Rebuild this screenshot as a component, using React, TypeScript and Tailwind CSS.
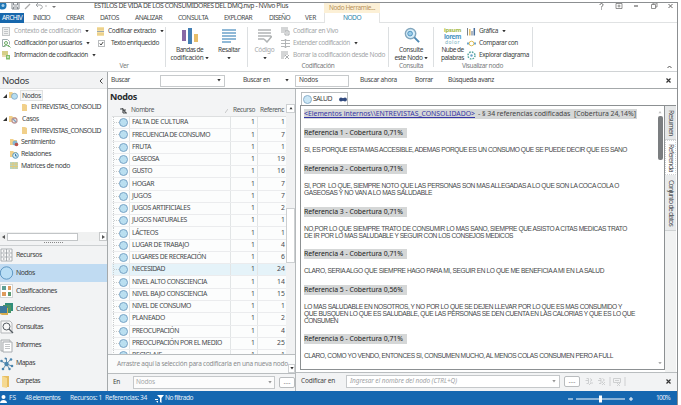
import { useLayoutEffect, useRef, type ReactNode } from "react";

/** Text whose tracking is computed so that the run is exactly `w` pixels long. */
function Fit({ w, children, className = "", vertical = false }: { w: number; children: string; className?: string; vertical?: boolean }) {
  const ref = useRef<HTMLSpanElement>(null);
  useLayoutEffect(() => {
    const el = ref.current;
    if (!el) return;
    el.style.letterSpacing = "0px";
    const box = el.getBoundingClientRect();
    const natural = vertical ? box.height : box.width;
    el.style.letterSpacing = `${(w - natural) / children.length}px`;
  }, [w, children, vertical]);
  return (
    <span ref={ref} className={`block w-max shrink-0 whitespace-pre ${vertical ? "[writing-mode:vertical-rl]" : ""} ${className}`}>
      {children}
    </span>
  );
}

function Caret({ className = "" }: { className?: string }) {
  return (
    <svg viewBox="0 0 4 3" className={`h-[2.5px] w-[4px] shrink-0 ${className}`}>
      <path d="M0 0h4L2 3z" fill="#333" />
    </svg>
  );
}

type Kind = "page" | "user" | "info" | "bands" | "stack" | "extend" | "erase" | "chart" | "compare" | "diagram";

function SmallIcon({ kind }: { kind: Kind }) {
  return (
    <svg viewBox="0 0 9 9" className="size-[9px] shrink-0" fill="none">
      {kind === "page" && (
        <g stroke="#c3c6c8">
          <rect x=".5" y=".5" width="7" height="8" fill="#eeefef" />
          <path d="M2 2.5h4M2 4.5h4M2 6.5h4" />
        </g>
      )}
      {kind === "user" && (
        <g>
          <path d="M.5.5h5l2 2v3M.5.5v7h3" stroke="#9eabb0" />
          <circle cx="4" cy="4" r="1.5" stroke="#6cab66" />
          <path d="M1.5 8c.3-2.500 4.700-2.500 5 0M6 6l2.500 2.500" stroke="#6cab66" />
        </g>
      )}
      {kind === "info" && (
        <g>
          <path d="M0 1h6M0 3h6" stroke="#c8c060" strokeWidth="1.300" />
          <path d="M0 5h4" stroke="#d5b85c" />
          <rect x="4" y="4" width="4" height="4.500" fill="#82bd69" />
          <path d="M5 6h2" stroke="#fff" />
        </g>
      )}
      {kind === "bands" && (
        <g>
          <rect x="1" width="7" height="9" fill="#f5e0a6" />
          <path d="M1 2h7M1 7h7" stroke="#e3c373" />
          <path d="M1 4.500h7" stroke="#9ba6ac" />
        </g>
      )}
      {kind === "stack" && <path d="M0 1h7M0 3h7M0 5h3M4 4h4v4H4zM5 6h2" stroke="#a9acae" />}
      {kind === "extend" && <path d="M0 1.500h3M6 1.500h3M0 4.500h9M0 7.500h3M6 7.500h3M4.500 0v9M3 2l1.500-2L6 2M3 7l1.500 2L6 7" stroke="#aaaeb0" strokeWidth=".9" />}
      {kind === "erase" && <path d="M0 1h7M0 3h7M0 5h4M0 7h3M4 4l4 4M8 4L4 8" stroke="#a9acae" />}
      {kind === "chart" && (
        <g>
          <path d="M.5 1v7.500" stroke="#78828a" />
          <path d="M2.800 2v6.500" stroke="#e5bc65" strokeWidth="1.500" />
          <path d="M5 4v4.500" stroke="#8390a0" strokeWidth="1.300" />
          <path d="M7.300 1v7.500" stroke="#496f9c" strokeWidth="1.500" />
        </g>
      )}
      {kind === "compare" && (
        <g>
          <circle cx="4.500" cy="4.500" r="2.300" stroke="#dfbd55" />
          <path d="M0 4.500h2M7 4.500h2" stroke="#6ca4c8" strokeWidth="2" />
        </g>
      )}
      {kind === "diagram" && (
        <g>
          <circle cx="4.500" cy="4.500" r="3.500" stroke="#56a6a0" strokeWidth="1.500" strokeDasharray="1.600 1.140" />
          <circle cx="4.500" cy="4.500" r="1.200" fill="#6ba4cc" />
        </g>
      )}
    </svg>
  );
}

function Command({ icon, w, label, caret, dim }: { icon: Kind; w: number; label: string; caret?: boolean; dim?: boolean }) {
  return (
    <div className={`flex h-[12.3px] items-center gap-[3px] ${dim ? "text-[#a3a6a8]" : "text-[#3c3f41]"}`}>
      <SmallIcon kind={icon} />
      <Fit w={w}>{label}</Fit>
      {caret && <Caret className="ml-px" />}
    </div>
  );
}

function Sep() {
  return <div className="mt-[4px] h-[40px] w-px shrink-0 bg-[#dcdfe1]" />;
}

function Group({ className, label, labelW, children }: { className: string; label?: string; labelW?: number; children: ReactNode }) {
  return (
    <div className={`flex h-[48px] shrink-0 flex-col ${className}`}>
      <div className="flex h-[39px] shrink-0 pt-[2px]">{children}</div>
      {label && (
        <div className="flex h-[9px] items-center justify-center text-[#797c7e]">
          <Fit w={labelW ?? 30}>{label}</Fit>
        </div>
      )}
    </div>
  );
}

function Big({ icon, className, one, oneW, two, twoW, dim }: {
  icon: ReactNode; className: string; one: string; oneW: number; two?: string; twoW?: number; dim?: boolean;
}) {
  return (
    <div className={`flex shrink-0 flex-col items-center ${className} ${dim ? "text-[#a3a6a8]" : "text-[#3c3f41]"}`}>
      <div className="flex h-[21px] items-center">{icon}</div>
      <div className="flex h-[8px] items-center"><Fit w={oneW}>{one}</Fit></div>
      <div className="flex h-[8px] items-center gap-px">
        {two && <Fit w={twoW ?? 20}>{two}</Fit>}
        {two !== "palabras" && <Caret />}
      </div>
    </div>
  );
}

function TitleBar() {
  return (
    <div className="flex h-[10px] items-start overflow-hidden">
      <svg viewBox="0 0 60 10" className="h-[10px] w-[60px] shrink-0" fill="none">
        <circle cx="2.500" cy="2.500" r="4" fill="#2077b5" />
        <circle cx="3" cy="2.500" r="1.500" fill="#a7d0ed" />
        <path d="M12 0v6h7V0M13.500 0v2h4V0M13.500 6V4h4v2" stroke="#858b91" />
        <path d="M25 6l5-5" stroke="#aaa" strokeWidth="1.200" />
        <path d="M36 2h4c3 0 3 4 0 4M36 2l2-2M36 2l2 2" stroke="#a1a5a8" />
        <path d="M45 3h2" stroke="#bbb" />
        <path d="M52 3h4l-2 2z" fill="#777" />
      </svg>
      <Fit w={194} className="ml-[34px] mt-[-2px] text-[6.8px] leading-[9px] text-[#444]">ESTILOS DE VIDA DE LOS CONSUMIDORES DEL DMQ.nvp - NVivo Plus</Fit>
      <div className="ml-[36px] flex h-[10px] w-[56px] items-center justify-center bg-[#fcf0d6] text-[#b8935a]">
        <Fit w={46}>Nodo Herramie...</Fit>
      </div>
      <svg viewBox="0 0 78 8" className="ml-[217px] h-[8px] w-[78px] shrink-0" fill="none" stroke="#666">
        <path d="M3 2c0-2 3-2 3 0 0 1-1.500 1-1.500 2.500M4.500 5.500v1" />
        <path d="M19 .500h6v5h-6zM22 1.500v3M20.500 3h3" strokeWidth=".7" />
        <path d="M37 3h4" strokeWidth="1.200" />
        <path d="M54.500 1.500h4v4h-4zM56 1.500V0h4v4h-1.500" strokeWidth=".7" />
        <path d="M71.500 1l4 4M75.500 1l-4 4" />
      </svg>
    </div>
  );
}

const tabs = [
  { t: "INICIO", w: 17, m: "ml-[9px]" },
  { t: "CREAR", w: 18, m: "ml-[16px]" },
  { t: "DATOS", w: 19, m: "ml-[16px]" },
  { t: "ANALIZAR", w: 27, m: "ml-[16px]" },
  { t: "CONSULTA", w: 30, m: "ml-[16px]" },
  { t: "EXPLORAR", w: 28, m: "ml-[16px]" },
  { t: "DISEÑO", w: 21, m: "ml-[17px]" },
  { t: "VER", w: 11, m: "ml-[15px]" },
];

function TabStrip() {
  return (
    <div className="flex h-[10px] items-start text-[6.6px] text-[#494c4e]">
      <div className="flex h-[10px] w-[24px] items-center bg-[#1767ac] pl-[2px] text-white"><Fit w={20}>ARCHIV</Fit></div>
      <div className="flex h-[10px] w-[300px] items-center border-b border-[#e0e2e3] pt-[2px]">
        {tabs.map((x) => <Fit key={x.t} w={x.w} className={x.m}>{x.t}</Fit>)}
      </div>
      <div className="flex h-[10px] w-[56px] items-center justify-center border-x border-[#e3e4e4] pt-px text-[#2e7fa9]"><Fit w={18}>NODO</Fit></div>
      <div className="h-[10px] flex-1 border-b border-[#e0e2e3]" />
    </div>
  );
}

function Ribbon() {
  return (
    <div className="flex h-[49px] border-b border-[#d0d3d5]">
      <Group className="w-[165px] pl-[2px] [&>div:last-child]:pl-[81px]" label="Ver" labelW={9}>
        <div className="w-[94px]">
          <Command icon="page" w={67} label="Contexto de codificación" caret dim />
          <Command icon="user" w={68} label="Codificación por usuarios" caret />
          <Command icon="info" w={74} label="Información de codificación" caret />
        </div>
        <div>
          <Command icon="bands" w={48} label="Codificar extracto" caret />
          <div className="flex h-[12.3px] items-center pl-[2px] text-[#3c3f41]">
            <svg viewBox="0 0 7 7" className="mr-[6px] size-[7px]" fill="none">
              <rect x=".5" y=".5" width="6" height="6" stroke="#b9bcbe" />
              <path d="M1.800 3.500l1.200 1.500 2.200-3" stroke="#444" />
            </svg>
            <Fit w={48}>Texto enriquecido</Fit>
          </div>
        </div>
      </Group>
      <Sep />
      <Group className="w-[81px]">
        <Big className="w-[47px]" one="Bandas de" oneW={27} two="codificación" twoW={33} icon={
          <svg viewBox="0 0 18 17" className="h-[17px] w-[18px]">
            <path d="M1 3h4v11H1z" fill="#8868a5" /><path d="M7 1h4v16H7z" fill="#447fb4" /><path d="M13 7h4v8h-4z" fill="#e7bd69" />
          </svg>} />
        <Big className="w-[32px]" one="Resaltar" oneW={22} icon={
          <svg viewBox="0 0 14 14" className="size-[14px]"><path d="M0 1h14M0 4h14M0 7h14M0 10h14M0 13h9" stroke="#6ca2ca" strokeWidth="1.700" /></svg>} />
      </Group>
      <Sep />
      <Group className="w-[140px]" label="Codificación" labelW={33}>
        <Big className="w-[33px]" dim one="Código" oneW={20} icon={
          <svg viewBox="0 0 14 14" className="size-[14px]" fill="none" stroke="#b1b4b5" strokeWidth="1.500"><path d="M0 1h13M0 4h13M0 7h13M0 10h6M6 10l3 3 5-6" /></svg>} />
        <div>
          <Command icon="stack" w={45} label="Codificar en Vivo" dim />
          <Command icon="extend" w={57} label="Extender codificación" dim caret />
          <Command icon="erase" w={92} label="Borrar la codificación desde Nodo" dim />
        </div>
      </Group>
      <Sep />
      <Group className="w-[44px]" label="Consulta" labelW={24}>
        <Big className="w-[44px]" one="Consulte" oneW={24} two="este Nodo" twoW={28} icon={
          <svg viewBox="0 0 18 18" className="size-[17px]" fill="none">
            <circle cx="8" cy="7" r="5.500" fill="#d8eefa" stroke="#82a6bd" strokeWidth="1.500" />
            <circle cx="7.500" cy="7" r="2.500" fill="#9bcde9" stroke="#4d91be" />
            <path d="M12 11l5 5" stroke="#4a87b3" strokeWidth="2" />
          </svg>} />
      </Group>
      <Sep />
      <Group className="w-[98px] [&>div:last-child]:pr-[1px]" label="Visualizar nodo" labelW={41}>
        <Big className="w-[33px] pr-[1px] pl-[5px]" one="Nube de" oneW={22} two="palabras" twoW={23} icon={
          <div className="flex h-[18px] w-[18px] flex-col items-center">
            <Fit w={17} className="h-[6px] text-[6px] font-bold leading-[6px] text-[#a4b843]">ipsum</Fit>
            <Fit w={17} className="h-[7px] text-[6.500px] font-bold leading-[7px] text-[#4c96c2]">lorem</Fit>
            <Fit w={15} className="h-[5px] text-[5px] leading-[5px] text-[#78b0be]">dolor</Fit>
          </div>} />
        <div>
          <Command icon="chart" w={19} label="Gráfica" caret />
          <Command icon="compare" w={39} label="Comparar con" />
          <Command icon="diagram" w={50} label="Explorar diagrama" />
        </div>
      </Group>
      <Sep />
      <svg viewBox="0 0 5 4" className="ml-[134px] mt-[42px] h-[4px] w-[5px]" fill="none"><path d="M.5 3l2-2 2 2" stroke="#555" /></svg>
    </div>
  );
}

function Close() {
  return <svg viewBox="0 0 5 5" className="size-[5px] shrink-0"><path d="M.5.5l4 4M4.500.5l-4 4" stroke="#333" strokeWidth="1.200" /></svg>;
}

function SearchBar() {
  return (
    <div className="flex h-[17px] items-center border-b border-[#a4a8aa] pl-[3px] pt-px text-[#444]">
      <Fit w={19}>Buscar</Fit>
      <div className="ml-[30px] flex h-[12px] w-[65px] items-center justify-end border border-[#c7cacc] pr-[3px]"><Caret /></div>
      <Fit w={27} className="ml-[18px]">Buscar en</Fit>
      <Caret className="ml-[15px]" />
      <div className="ml-[6px] flex h-[12px] w-[54px] items-center border border-[#c7cacc] pl-[3px]"><Fit w={19}>Nodos</Fit></div>
      <Fit w={37} className="ml-[11px]">Buscar ahora</Fit>
      <Fit w={18} className="ml-[18px]">Borrar</Fit>
      <Fit w={46} className="ml-[15px]">Búsqueda avanz</Fit>
      <div className="ml-auto mr-[6px]"><Close /></div>
    </div>
  );
}

function TreeIcon({ kind }: { kind: "node" | "case" | "folder" | "feel" | "rel" | "matrix" }) {
  return (
    <svg viewBox="0 0 9 9" className="size-[9px] shrink-0" fill="none">
      {kind !== "matrix" && <path d={kind === "folder" ? "M2 1h3l2 1v6H2z" : "M0 1h3l1 1h3v5H0z"} fill="#f1d08a" />}
      {kind === "node" && <circle cx="5.500" cy="5.300" r="3" fill="#b9def1" stroke="#709dc2" strokeWidth=".7" />}
      {kind === "case" && <g strokeWidth="1.300"><circle cx="5.500" cy="5.500" r="2.500" fill="#f3eceb" stroke="#bd9696" /><path d="M4 4l3 3" stroke="#7ba2bd" /></g>}
      {kind === "feel" && <g><circle cx="5" cy="5" r="2.500" fill="#86b7d2" /><circle cx="6.500" cy="6.500" r="1.800" fill="#b9524b" /></g>}
      {kind === "rel" && <g><circle cx="5.500" cy="5.500" r="2.800" fill="#d8edf7" stroke="#5798bd" /><path d="M5.500 4v2H7" stroke="#427da7" /></g>}
      {kind === "matrix" && <g><rect y="1" width="8" height="7" fill="#b8d4c3" /><path d="M0 3h8M0 5.500h8M3 1v7M6 1v7" stroke="#e7c96e" strokeWidth=".8" /></g>}
    </svg>
  );
}

function Tree() {
  const arrow = <svg viewBox="0 0 4 4" className="size-[4px] shrink-0"><path d="M4 0v4H0z" fill="#333" /></svg>;
  return (
    <div className="h-[143px] bg-white pt-[1px] text-[6.8px] text-[#414446] [&>div]:flex [&>div]:h-[11.7px] [&>div]:items-center [&>div]:gap-[2px]">
      <div className="pl-[3px]">{arrow}<TreeIcon kind="node" /><div className="border border-[#e1e2e2] bg-[#f7f7f7] px-px leading-[9px]"><Fit w={19}>Nodos</Fit></div></div>
      <div className="pl-[20px]"><TreeIcon kind="folder" /><Fit w={70}>ENTREVISTAS_CONSOLID</Fit></div>
      <div className="pl-[3px]">{arrow}<TreeIcon kind="case" /><Fit w={17} className="ml-[2px]">Casos</Fit></div>
      <div className="pl-[20px]"><TreeIcon kind="folder" /><Fit w={70}>ENTREVISTAS_CONSOLID</Fit></div>
      <div className="pl-[10px]"><TreeIcon kind="feel" /><Fit w={34}>Sentimiento</Fit></div>
      <div className="pl-[10px]"><TreeIcon kind="rel" /><Fit w={30}>Relaciones</Fit></div>
      <div className="pl-[10px]"><TreeIcon kind="matrix" /><Fit w={49}>Matrices de nodo</Fit></div>
    </div>
  );
}

function NavIcon({ i }: { i: number }) {
  return (
    <svg viewBox="0 0 14 14" className="h-[14px] w-[14px] shrink-0" fill="none">
      {i === 0 && <g stroke="#9a9fa3" strokeWidth=".8"><path d="M1 1h11v12H1zM1 5h11M1 9h11M6.500 1v12" fill="#fafafa" /><path d="M3 3h1.500M8.500 3H10M3 7h1.500M8.500 7H10M3 11h1.500M8.500 11H10" stroke="#6f757a" /></g>}
      {i === 1 && <circle cx="6.500" cy="7" r="6.200" fill="#b9def5" stroke="#5590bd" strokeWidth=".9" />}
      {i === 2 && <g><rect x=".5" y=".5" width="12" height="13" stroke="#d1d5d6" fill="#fff" /><path d="M2 2h4v4H2z" fill="#5f9f94" /><path d="M8 2h3v4H8zM2 8h4v4H2z" fill="#de9b5c" /><path d="M8 8h3v4H8z" fill="#5c9a72" /></g>}
      {i === 3 && <g><path d="M5 1h8v8H5z" fill="#318d7b" /><path d="M3 3h8v8H3z" fill="#4d9565" /><path d="M0 6h8v7H2L0 12z" fill="#d9ad4d" /><path d="M0 4h7v7H0z" fill="#3d7a9d" /></g>}
      {i === 4 && <g><path d="M1 1h9l2 2v10H1z" fill="#f8f8f8" stroke="#b4b7ba" /><circle cx="6.500" cy="6.500" r="3.500" stroke="#555c62" /><path d="M9 9l4 4" stroke="#555c62" strokeWidth="1.300" /></g>}
      {i === 5 && <g stroke="#a8acaf"><path d="M1 1h9v11H1z" fill="#eee" /><path d="M3 3h9v10H3z" fill="#fff" /><path d="M5 5.500h5M5 7.500h5M5 9.500h5" strokeWidth=".7" /></g>}
      {i === 6 && <g stroke="#668fad"><path d="M6.500 7L1 4M6.500 7L11 2M6.500 7L12 9M6.500 7L3 12M6.500 7V1M6.500 7l3 5" /><g fill="#4b85ae" stroke="none"><circle cx="6.500" cy="7" r="2.200" /><circle cx="1.500" cy="4" r="1.300" /><circle cx="11" cy="2.500" r="1.300" /><circle cx="12" cy="9" r="1.300" /><circle cx="3" cy="12" r="1.300" /><circle cx="9.500" cy="12" r="1.200" /><circle cx="5.500" cy="1.500" r="1" /></g></g>}
      {i === 7 && <g><path d="M2 1h7v11H2z" fill="#e7bd61" /><path d="M2 1l5 2v10l-5-1z" fill="#f5d991" /></g>}
    </svg>
  );
}

const nav: [string, number][] = [["Recursos", 26], ["Nodos", 19], ["Clasificaciones", 41], ["Colecciones", 34], ["Consultas", 27], ["Informes", 25], ["Mapas", 19], ["Carpetas", 24]];

function Sidebar() {
  return (
    <div className="flex w-[108px] shrink-0 flex-col border-r border-[#a5a9ab] bg-[#f2f3f4]">
      <div className="flex h-[17px] shrink-0 items-center justify-between border-b border-[#dfe1e2] pl-[2px] pr-[4px] pt-px text-[9.5px] text-[#3c4144]">
        <Fit w={27}>Nodos</Fit>
        <svg viewBox="0 0 4 6" className="h-[6px] w-[4px]" fill="none"><path d="M3.500.5L1 3l2.500 2.500" stroke="#444" /></svg>
      </div>
      <Tree />
      <div className="flex h-[9px] items-center justify-between bg-[#f0f1f1]">
        <div className="flex h-[9px] w-[7px] items-center justify-center"><svg viewBox="0 0 3 4" className="h-[4px] w-[3px]"><path d="M3 0v4L0 2z" fill="#555" /></svg></div>
        <div className="mr-auto h-[8px] w-[71px] border border-[#c2c5c7] bg-white" />
        <div className="flex h-[9px] w-[8px] items-center justify-center border border-[#c7c9ca] bg-white"><svg viewBox="0 0 3 4" className="h-[4px] w-[3px]"><path d="M0 0v4l3-2z" fill="#555" /></svg></div>
      </div>
      <div className="flex h-[5px] items-start justify-center border-b border-[#cdd0d2] pt-[1px]"><div className="w-[19px] border-t border-dotted border-[#888]" /></div>
      {nav.map(([t, w], i) => (
        <div key={t} className={`flex h-[18.1px] shrink-0 items-center gap-[2px] text-[6.9px] text-[#3e4143] ${i === 1 ? "bg-[#c0dbf2]" : ""}`}>
          <NavIcon i={i} /><Fit w={w}>{t}</Fit>
        </div>
      ))}
    </div>
  );
}

const nodes: [string, number, number][] = [
  ["FALTA DE CULTURA", 56, 1], ["FRECUENCIA DE CONSUMO", 78, 7], ["FRUTA", 19, 1], ["GASEOSA", 27, 19], ["GUSTO", 20, 16],
  ["HOGAR", 22, 7], ["JUGOS", 19, 7], ["JUGOS ARTIFICIALES", 58, 2], ["JUGOS NATURALES", 55, 1], ["LÁCTEOS", 26, 1],
  ["LUGAR DE TRABAJO", 57, 4], ["LUGARES DE RECREACIÓN", 74, 6], ["NECESIDAD", 33, 24], ["NIVEL ALTO CONSCIENCIA", 75, 14],
  ["NIVEL BAJO CONSCIENCIA", 75, 15], ["NIVEL DE CONSUMO", 59, 1], ["PLANEADO", 33, 2], ["PREOCUPACIÓN", 47, 4],
  ["PREOCUPACIÓN POR EL MEDIO", 90, 25], ["RECICLAJE", 30, 1],
];

function NodeList() {
  return (
    <div className="flex w-[188px] shrink-0 flex-col border-r border-[#b5b9bb] bg-[#f3f4f5]">
      <div className="flex h-[15px] items-end pb-[1px] pl-[2px] text-[9px] font-bold leading-[12px] text-[#292c2e]"><Fit w={27}>Nodos</Fit></div>
      <div className="flex h-[250px]">
        <div className="w-[178px] overflow-hidden pl-[4px]">
          <div className="flex h-[13px] items-center border-b border-[#dddfe0] pt-px text-[#565a5c]">
            <svg viewBox="0 0 7 6" className="ml-[8px] h-[6px] w-[7px]" fill="none"><path d="M0 1h3v4M2 0l4 5M4 2h2M3 5h4" stroke="#4b4e50" strokeWidth="1.200" /></svg>
            <Fit w={23} className="ml-[4px]">Nombre</Fit>
            <svg viewBox="0 0 3 4" className="ml-[71px] h-[4px] w-[3px]"><path d="M3 0L0 4" stroke="#aaa" strokeWidth=".6" /></svg>
            <Fit w={22} className="ml-[5px]">Recurso</Fit>
            <Fit w={24} className="ml-[5px]">Referenc</Fit>
          </div>
          <div className="bg-[#fcfdfd]">
            {nodes.map(([t, w, n], i) => (
              <div key={t} className={`flex h-[12.27px] items-center border-b border-[#ebecee] text-[6.8px] text-[#484b4d] ${i === 12 ? "bg-[#e5f3f9]" : ""}`}>
                <div className="ml-px flex h-full w-[6px] shrink-0 items-center border-l border-dotted border-[#c9cccd]"><div className="w-full border-t border-dotted border-[#c9cccd]" /></div>
                <div className="size-[9px] shrink-0 rounded-full border border-[#79a4c6] bg-[#badff0]" />
                <div className="ml-[1px] flex h-full w-[102px] shrink-0 items-center border-x border-[#e2e5e6] pl-[2px]"><Fit w={w}>{t}</Fit></div>
                <div className="flex h-full w-[27px] shrink-0 items-center justify-end border-r border-[#e2e5e6] pr-[2px]">1</div>
                <div className="flex w-[28px] shrink-0 justify-end pr-px"><Fit w={n > 9 ? 8 : 4}>{String(n)}</Fit></div>
              </div>
            ))}
          </div>
        </div>
        <div className="w-[9px] bg-[#f1f2f3]">
          <div className="flex h-[9px] items-center justify-center border border-[#cdd0d2] bg-white"><Caret className="rotate-180" /></div>
          <div className="mt-[95px] h-[55px] border border-[#cdd0d2] bg-white" />
        </div>
      </div>
      <div className="flex h-[20px] items-center border-y border-[#b9bdbf] bg-[#fafbfb] pl-[9px] pt-px text-[#8a8d8f]">
        <Fit w={171}>Arrastre aquí la selección para codificarla en una nueva nodo</Fit>
        <div className="flex h-[9px] w-[7px] shrink-0 items-center justify-center self-end border border-[#cdd0d2] bg-white"><Caret /></div>
      </div>
      <div className="flex h-[17px] items-center pl-[5px] text-[#444]">
        <Fit w={7}>En</Fit>
        <div className="ml-[13px] flex h-[13px] w-[142px] items-center justify-between border border-[#c5c8ca] bg-[#fcfcfc] px-[2px] text-[#a5a8aa]"><Fit w={19}>Nodos</Fit><Caret className="opacity-50" /></div>
        <div className="ml-[4px] flex h-[11px] w-[16px] items-center justify-center rounded-[2px] border border-[#b9bcbe] bg-white text-[#888]">....</div>
      </div>
    </div>
  );
}

function Ref({ n, pct }: { n: number; pct: string }) {
  return <div className="flex h-[10px] w-[103px] items-center bg-[#d5d7d7] text-[6.9px] text-[#222]"><Fit w={99}>{`Referencia ${n} - Cobertura ${pct}%`}</Fit></div>;
}

function Para({ lines, className }: { lines: [string, number][]; className: string }) {
  return (
    <div className={`font-['Liberation_Sans',sans-serif] text-[6.6px] leading-[7px] text-[#454749] ${className}`}>
      {lines.map(([t, w]) => <Fit key={t} w={w}>{t}</Fit>)}
    </div>
  );
}

function Document() {
  return (
    <div className="flex h-[265px] w-[365px] border border-[#8c9092] bg-white">
      <div className="w-[355px] pl-[3px] pt-[3px]">
        <div className="flex h-[10px] w-[333px] items-center bg-[#d5d7d7] text-[6.9px] text-[#444]">
          <Fit w={171} className="text-[#3535a5] underline underline-offset-1">{"<Elementos internos\\\\ENTREVISTAS_CONSOLIDADO>"}</Fit>
          <Fit w={158} className="ml-[3px]">{"- § 34 referencias codificadas  [Cobertura 24,14%]"}</Fit>
        </div>
        <div className="h-[9px]" />
        <Ref n={1} pct="0,71" />
        <Para className="mt-[8px] h-[18px]" lines={[["SI, ES PORQUE ESTA MAS ACCESIBLE, ADEMAS PORQUE ES UN CONSUMO QUE SE PUEDE DECIR QUE ES SANO", 323]]} />
        <Ref n={2} pct="0,71" />
        <Para className="mt-[8px] h-[25px]" lines={[["SI, POR  LO QUE, SIEMPRE NOTO QUE LAS PERSONAS SON MAS ALLEGADAS A LO QUE SON LA COCA COLA O", 315], ["GASEOSAS Y NO VAN A LO MAS SALUDABLE", 128]]} />
        <Ref n={3} pct="0,71" />
        <Para className="mt-[8px] h-[24px]" lines={[["NO,POR LO QUE SIEMPRE TRATO DE CONSUMIR LO MAS SANO, SIEMPRE QUE ASISTO A CITAS MEDICAS TRATO", 323], ["DE IR POR LO MAS SALUDABLE Y SEGUIR CON LOS CONSEJOS MEDICOS", 209]]} />
        <Ref n={4} pct="0,71" />
        <Para className="mt-[8px] h-[18px]" lines={[["CLARO, SERIA ALGO QUE SIEMPRE HAGO PARA MI, SEGUIR EN LO QUE ME BENEFICIA A MI EN LA SALUD", 300]]} />
        <Ref n={5} pct="0,56" />
        <Para className="mt-[8px] h-[31px]" lines={[["LO MAS SALUDABLE EN NOSOTROS, Y NO POR LO QUE SE DEJEN LLEVAR POR LO QUE ES MAS CONSUMIDO Y", 318], ["QUE BUSQUEN LO QUE ES SALUDABLE, QUE LAS PERSONAS SE DEN CUENTA EN LAS CALORIAS Y QUE ES LO QUE", 331], ["CONSUMEN", 34]]} />
        <Ref n={6} pct="0,71" />
        <Para className="mt-[8px] h-[8px]" lines={[["CLARO, COMO YO VENDO, ENTONCES SI, CONSUMEN MUCHO, AL MENOS COLAS CONSUMEN PERO A FULL", 309]]} />
      </div>
      <div className="flex w-[8px] flex-col items-center justify-between pb-[5px] pt-[5px]">
        <Caret className="rotate-180 opacity-30" />
        <div className="mb-auto mt-[2px] h-[44px] w-[5px] rounded-[2px] bg-[#7b7e80]" />
        <Caret className="opacity-40" />
      </div>
    </div>
  );
}

function Detail() {
  return (
    <div className="flex min-w-0 flex-1 flex-col bg-[#f2f3f4]">
      <div className="flex h-[283px] bg-white pl-[4px]">
        <div className="flex flex-col">
          <div className="flex h-[16px] items-end pl-[1px]">
            <div className="flex h-[13px] w-[47px] items-center border border-b-0 border-[#b9bdbf] pl-[1px] text-[6.900px] text-[#444]">
              <div className="size-[9px] rounded-full border border-[#8cb0cc] bg-[#cbe7f6]" />
              <Fit w={19} className="ml-[1px]">SALUD</Fit>
              <svg viewBox="0 0 8 5" className="ml-[7px] h-[5px] w-[8px]"><path d="M1 1h6v3H1z" fill="#4b659a" /><circle cx="2" cy="2.500" r="1.900" fill="#31497d" /><circle cx="6" cy="2.500" r="1.900" fill="#31497d" /></svg>
            </div>
          </div>
          <Document />
        </div>
        <div className="mt-[16px] flex w-[11px] flex-col items-center border-t border-[#8c9092] bg-[#f1f2f2] text-[6.9px] text-[#4b4e50] [&>div]:flex [&>div]:w-[11px] [&>div]:items-center [&>div]:justify-center [&>div]:border-b [&>div]:border-[#cfd2d3]">
          <div className="h-[34px] bg-[#e5e7e8]"><Fit vertical w={26}>Resumen</Fit></div>
          <div className="h-[35px] border border-dotted bg-white"><Fit vertical w={28}>Referencia</Fit></div>
          <div className="h-[56px] bg-[#e9ebec]"><Fit vertical w={46}>Conjunto de datos</Fit></div>
        </div>
      </div>
      <div className="flex h-[18px] items-center border-t border-[#b9bdbf] pl-[5px] text-[#444]">
        <Fit w={34}>Codificar en</Fit>
        <div className="ml-[11px] flex h-[13px] w-[214px] items-center justify-between border border-[#c5c8ca] bg-white px-[3px] italic text-[#a0a3a5]"><Fit w={107}>Ingresar el nombre del nodo (CTRL+Q)</Fit><Caret className="opacity-50" /></div>
        <div className="ml-[4px] flex h-[11px] w-[16px] items-center justify-center rounded-[2px] border border-[#b9bcbe] bg-white text-[#888]">....</div>
        <svg viewBox="0 0 44 9" className="ml-[4px] h-[9px] w-[44px]" fill="none" stroke="#c9cccd" strokeWidth=".9">
          <path d="M1.500 3.500h3M2.500 1.500h2v5h-2M6 1.500l2 1.500-2 1.500M6 6h3M5 8l2-2M14 3.500h3M15 1.500h2v5h-2M18.500 1.500l2 1.500-2 1.500M18 5l3 3M21 5l-3 3M26 0v9M29.500 1.500h7v4h-7zM31 3.500h4M33 6l3 3M36 6l-3 3M41 0v9" />
        </svg>
        <div className="ml-auto mr-[6px]"><Close /></div>
      </div>
    </div>
  );
}

function StatusBar() {
  return (
    <div className="flex h-[14px] items-center bg-[#1567b0] pt-px text-[6.6px] text-[#e4f0fa]">
      <svg viewBox="0 0 7 8" className="h-[8px] w-[7px]" fill="#fff"><circle cx="3.500" cy="2" r="2" /><path d="M0 8c0-4 7-4 7 0z" /></svg>
      <Fit w={7} className="ml-[2px]">FS</Fit>
      <Fit w={35} className="ml-[9px]">48 elementos</Fit>
      <Fit w={32} className="ml-[10px]">Recursos: 1</Fit>
      <Fit w={42} className="ml-[3px]">Referencias: 34</Fit>
      <svg viewBox="0 0 9 8" className="ml-[8px] h-[8px] w-[9px]" fill="#fff"><path d="M2 0h7L6.500 3v5L5 7V3zM0 4h3v1H0zM1 6h2v2z" /></svg>
      <Fit w={28} className="ml-[1px]">No filtrado</Fit>
      <svg viewBox="0 0 66 8" className="ml-[375px] h-[8px] w-[66px]" stroke="#fff"><path d="M0 4h5M8 4h49M61 4h4M63 2v4" /><path d="M32.500.5v7" strokeWidth="3" /></svg>
      <Fit w={14} className="ml-[22px]">100%</Fit>
    </div>
  );
}

export default function App() {
  return (
    <div className="h-[405px] w-[681px] overflow-hidden bg-white pt-[2px] font-['Noto_Sans','Open_Sans',sans-serif] text-[6.5px] leading-none">
      <div className="flex h-[403px] w-[678px] flex-col border-r border-t border-[#8c8f91]">
        <TitleBar />
        <TabStrip />
        <Ribbon />
        <div className="flex h-[319px] shrink-0">
          <Sidebar />
          <div className="flex min-w-0 flex-1 flex-col">
            <SearchBar />
            <div className="flex h-[302px]">
              <NodeList />
              <Detail />
            </div>
          </div>
        </div>
        <StatusBar />
      </div>
    </div>
  );
}
